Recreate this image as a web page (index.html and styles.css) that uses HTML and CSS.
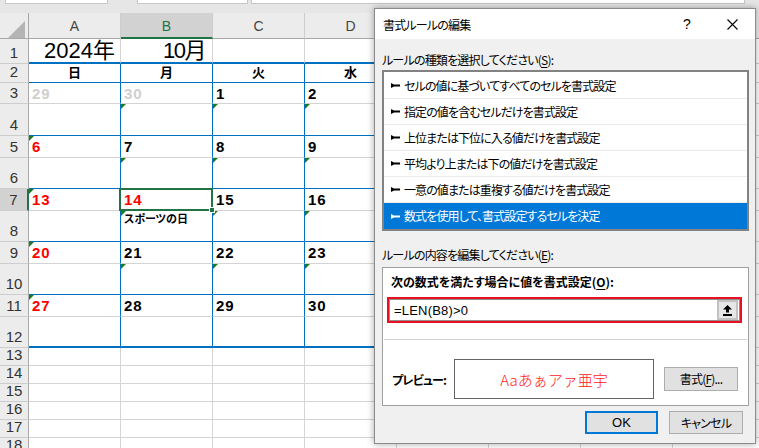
FILE: index.html
```html
<!DOCTYPE html>
<html lang="ja">
<head>
<meta charset="utf-8">
<title>書式ルールの編集</title>
<link rel="stylesheet" href="styles.css">
</head>
<body>
<div class="topbar">
  <div class="box b1"></div><div class="box b2"></div><div class="box b3"></div>
</div>
<div class="sheet">
  <div class="row hdr">
    <div class="corner"><span class="ctri"></span></div>
    <div class="c ch">A</div><div class="c ch sel">B</div><div class="c ch">C</div><div class="c ch">D</div><div class="c ch"></div><div class="c ch"></div><div class="c ch"></div><div class="c ch"></div>
  </div>
  <div class="row h25 bb2">
    <div class="rh">1</div>
    <div class="c big">2024年</div><div class="c big mon">10月</div><div class="c"></div><div class="c"></div><div class="c"></div><div class="c"></div><div class="c"></div><div class="c"></div>
  </div>
  <div class="row h19 cal bb">
    <div class="rh">2</div>
    <div class="c wd">日</div><div class="c wd">月</div><div class="c wd">火</div><div class="c wd">水</div><div class="c"></div><div class="c"></div><div class="c"></div><div class="c"></div>
  </div>
  <div class="row h21 cal">
    <div class="rh">3</div>
    <div class="c d gray">29</div><div class="c d gray">30</div><div class="c d">1</div><div class="c d">2</div><div class="c"></div><div class="c"></div><div class="c"></div><div class="c"></div>
  </div>
  <div class="row h32 cal bb">
    <div class="rh">4</div>
    <div class="c"></div><div class="c t"></div><div class="c t"></div><div class="c t"></div><div class="c t"></div><div class="c t"></div><div class="c t"></div><div class="c"></div>
  </div>
  <div class="row h22 cal">
    <div class="rh">5</div>
    <div class="c d red t">6</div><div class="c d">7</div><div class="c d">8</div><div class="c d">9</div><div class="c"></div><div class="c"></div><div class="c"></div><div class="c"></div>
  </div>
  <div class="row h31 cal bb">
    <div class="rh">6</div>
    <div class="c"></div><div class="c t"></div><div class="c t"></div><div class="c t"></div><div class="c t"></div><div class="c t"></div><div class="c t"></div><div class="c"></div>
  </div>
  <div class="row h22 cal">
    <div class="rh sel">7</div>
    <div class="c d red t">13</div><div class="c d red selc">14<span class="fh"></span></div><div class="c d">15</div><div class="c d">16</div><div class="c"></div><div class="c"></div><div class="c"></div><div class="c"></div>
  </div>
  <div class="row h31 cal bb">
    <div class="rh">8</div>
    <div class="c"></div><div class="c t note">スポーツの日</div><div class="c t"></div><div class="c t"></div><div class="c t"></div><div class="c t"></div><div class="c t"></div><div class="c"></div>
  </div>
  <div class="row h22 cal">
    <div class="rh">9</div>
    <div class="c d red t">20</div><div class="c d">21</div><div class="c d">22</div><div class="c d">23</div><div class="c"></div><div class="c"></div><div class="c"></div><div class="c"></div>
  </div>
  <div class="row h31 cal bb">
    <div class="rh">10</div>
    <div class="c"></div><div class="c t"></div><div class="c t"></div><div class="c t"></div><div class="c t"></div><div class="c t"></div><div class="c t"></div><div class="c"></div>
  </div>
  <div class="row h22 cal">
    <div class="rh">11</div>
    <div class="c d red t">27</div><div class="c d">28</div><div class="c d">29</div><div class="c d">30</div><div class="c"></div><div class="c"></div><div class="c"></div><div class="c"></div>
  </div>
  <div class="row h31 cal bb2">
    <div class="rh">12</div>
    <div class="c"></div><div class="c"></div><div class="c"></div><div class="c"></div><div class="c"></div><div class="c"></div><div class="c"></div><div class="c"></div>
  </div>
  <div class="row h18"><div class="rh">13</div><div class="c"></div><div class="c"></div><div class="c"></div><div class="c"></div><div class="c"></div><div class="c"></div><div class="c"></div><div class="c"></div></div>
  <div class="row h18"><div class="rh">14</div><div class="c"></div><div class="c"></div><div class="c"></div><div class="c"></div><div class="c"></div><div class="c"></div><div class="c"></div><div class="c"></div></div>
  <div class="row h18"><div class="rh">15</div><div class="c"></div><div class="c"></div><div class="c"></div><div class="c"></div><div class="c"></div><div class="c"></div><div class="c"></div><div class="c"></div></div>
  <div class="row h18"><div class="rh">16</div><div class="c"></div><div class="c"></div><div class="c"></div><div class="c"></div><div class="c"></div><div class="c"></div><div class="c"></div><div class="c"></div></div>
  <div class="row h18"><div class="rh">17</div><div class="c"></div><div class="c"></div><div class="c"></div><div class="c"></div><div class="c"></div><div class="c"></div><div class="c"></div><div class="c"></div></div>
  <div class="row h18"><div class="rh">18</div><div class="c"></div><div class="c"></div><div class="c"></div><div class="c"></div><div class="c"></div><div class="c"></div><div class="c"></div><div class="c"></div></div>
</div>

<div class="dlg">
  <div class="tbar">
    <span class="ttl">書式ルールの編集</span>
    <span class="q">?</span>
    <svg class="x" width="11" height="11" viewBox="0 0 11 11"><path d="M0.5 0.5 L10.5 10.5 M10.5 0.5 L0.5 10.5" stroke="#000" stroke-width="1.1" fill="none"/></svg>
  </div>
  <div class="dbody">
    <div class="lbl">ルールの種類を選択してください(<u>S</u>):</div>
    <div class="list">
      <div class="item"><svg class="arr" width="9" height="5" viewBox="0 0 9 5"><path d="M0 0 L3 1.5 L9 1.5 L9 3.5 L3 3.5 L0 5 Z"/></svg>セルの値に基づいてすべてのセルを書式設定</div>
      <div class="item"><svg class="arr" width="9" height="5" viewBox="0 0 9 5"><path d="M0 0 L3 1.5 L9 1.5 L9 3.5 L3 3.5 L0 5 Z"/></svg>指定の値を含むセルだけを書式設定</div>
      <div class="item"><svg class="arr" width="9" height="5" viewBox="0 0 9 5"><path d="M0 0 L3 1.5 L9 1.5 L9 3.5 L3 3.5 L0 5 Z"/></svg>上位または下位に入る値だけを書式設定</div>
      <div class="item"><svg class="arr" width="9" height="5" viewBox="0 0 9 5"><path d="M0 0 L3 1.5 L9 1.5 L9 3.5 L3 3.5 L0 5 Z"/></svg>平均より上または下の値だけを書式設定</div>
      <div class="item"><svg class="arr" width="9" height="5" viewBox="0 0 9 5"><path d="M0 0 L3 1.5 L9 1.5 L9 3.5 L3 3.5 L0 5 Z"/></svg>一意の値または重複する値だけを書式設定</div>
      <div class="item on"><svg class="arr" width="9" height="5" viewBox="0 0 9 5"><path d="M0 0 L3 1.5 L9 1.5 L9 3.5 L3 3.5 L0 5 Z"/></svg>数式を使用して、書式設定するセルを決定</div>
    </div>
    <div class="lbl lbl2">ルールの内容を編集してください(<u>E</u>):</div>
    <div class="group">
      <div class="glbl">次の数式を満たす場合に値を書式設定(<u>O</u>):</div>
      <div class="fbox">
        <div class="finput">
          <span class="ftext">=LEN(B8)&gt;0</span>
          <span class="refbtn"><svg width="9" height="11" viewBox="0 0 9 11"><path d="M4.5 0 L9 4.5 L6 4.5 L6 7.5 L3 7.5 L3 4.5 L0 4.5 Z"/><rect x="0" y="9" width="9" height="2"/></svg></span>
        </div>
      </div>
      <div class="gsep"></div>
      <div class="prow">
        <span class="plbl">プレビュー:</span>
        <div class="pbox">Aaあぁアァ亜宇</div>
        <div class="btn fmt">書式(<u>F</u>)...</div>
      </div>
    </div>
    <div class="brow">
      <div class="btn ok">OK</div>
      <div class="btn cancel">キャンセル</div>
    </div>
  </div>
</div>
</body>
</html>
```
FILE: styles.css
```css
* { box-sizing: border-box; margin: 0; padding: 0; }
html, body { width: 759px; height: 448px; overflow: hidden; background: #fff; }
body { position: relative; font-family: "Liberation Sans", "Noto Sans CJK JP", sans-serif; color: #000; }

.topbar { height: 13px; background: #e6e6e6; display: flex; align-items: flex-start; }
.box { height: 4px; background: #fff; border: 1px solid #c6c6c6; border-top: none; }
.b1 { margin-left: 5px; width: 103px; }
.b2 { margin-left: 29px; width: 111px; }
.b3 { margin-left: 3px; width: 494px; }

.sheet { display: flex; flex-direction: column; }
.row { display: flex; flex: none; }
.hdr { height: 26px; }
.h25 { height: 25px; }
.h19 { height: 19px; }
.h21 { height: 21px; }
.h22 { height: 22px; }
.h31 { height: 31px; }
.h32 { height: 32px; }
.h18 { height: 18px; }

.c {
  flex: none; width: 92px; position: relative;
  border-right: 1px solid #d4d4d4; border-bottom: 1px solid #d4d4d4;
  display: flex; align-items: center;
}
.corner, .rh {
  flex: none; width: 29px; background: #ececec;
  border-right: 1px solid #a8a8a8; border-bottom: 1px solid #cdcdcd;
  display: flex; justify-content: center; align-items: flex-end;
  padding-bottom: 3px; font-size: 15px; line-height: 15px; color: #333;
  position: relative;
}
.rh.sel { background: #d2d2d2; border-right: 2px solid #217346; }
.corner { border-bottom-color: #a8a8a8; }
.ctri {
  position: absolute; left: 8px; top: 8px; width: 0; height: 0;
  border-left: 17px solid transparent; border-bottom: 17px solid #b4b4b4;
}
.ch {
  background: #ececec; border-right-color: #cdcdcd; border-bottom-color: #a8a8a8;
  justify-content: center; font-size: 14px; color: #444; padding-top: 1px;
}
.ch.sel { background: #d2d2d2; color: #217346; border-bottom: 2px solid #217346; }

.cal > .c { border-right-color: #0070c0; }
.cal > .c:last-child { border-right-color: #d4d4d4; }
.bb > .c { border-bottom-color: #0070c0; }
.bb2 > .c { border-bottom: 2px solid #0070c0; }
.bb > .c:last-child { border-bottom-color: #d4d4d4; }
.bb2 > .c:last-child { border-bottom: 1px solid #d4d4d4; }

.big {
  justify-content: flex-end; padding-right: 5px;
  font-family: "Liberation Sans", "Noto Sans CJK JP", sans-serif; font-weight: normal;
  font-size: 22px; line-height: 22px; color: #000;
}
.big.mon { padding-right: 7px; letter-spacing: -1.5px; }
.wd {
  justify-content: center; font-family: "Liberation Sans", "Noto Sans CJK JP", sans-serif;
  font-weight: bold; font-size: 13px; line-height: 14px;
}
.d {
  padding-left: 3px; font-weight: bold; font-size: 15px; letter-spacing: 1px;
  font-family: "Liberation Sans", sans-serif; color: #000;
}
.d.red { color: #ff0000; }
.d.gray { color: #cfcfcf; }
.t::before {
  content: ""; position: absolute; left: 0; top: 0; width: 0; height: 0;
  border-top: 5px solid #1b7d1b; border-right: 5px solid transparent;
}
.note {
  align-items: flex-start; padding: 1px 0 0 3px;
  font-family: "Noto Sans CJK JP", sans-serif; font-weight: bold;
  font-size: 11px; line-height: 12px; font-feature-settings: "palt";
}
.selc { z-index: 2; }
.selc::after {
  content: ""; position: absolute; left: -2px; top: -1px; right: -1px; bottom: -1px;
  border: 2px solid #217346;
}
.fh {
  position: absolute; right: -3px; bottom: -3px; width: 6px; height: 6px;
  background: #217346; border: 1px solid #fff; z-index: 3;
}

/* dialog */
.dlg {
  position: absolute; left: 374px; top: 8px; width: 382px; height: 436px;
  background: #f0f0f0; border: 1px solid #8c8c8c;
  box-shadow: 0 0 7px rgba(0, 0, 0, 0.35);
  font-family: "Noto Sans CJK JP", sans-serif; font-size: 12px; color: #000;
  font-feature-settings: "palt"; letter-spacing: -0.8px;
  display: flex; flex-direction: column; z-index: 10;
}
.tbar {
  height: 30px; flex: none; background: #fff; display: flex; align-items: center;
  padding-left: 8px; font-size: 12px;
}
.q { margin-left: auto; width: 8px; text-align: center; font-family: "Liberation Sans", sans-serif; font-size: 14px; letter-spacing: 0; }
.x { margin-left: 36px; margin-right: 17px; }

.dbody { padding: 12px 6px 0 7px; display: flex; flex-direction: column; }
.lbl { line-height: 18px; height: 18px; }
.lbl u, .glbl u, .btn u { text-decoration-thickness: 1px; text-underline-offset: 2px; }
.list {
  margin-top: 1px; height: 161px; background: #fff;
  border: 2px solid #828282; padding-top: 1px;
}
.item {
  height: 26px; border-bottom: 1px solid #ebebeb; display: flex; align-items: center;
  padding-left: 7px; line-height: 16px; letter-spacing: -0.9px;
}
.item .arr { margin-right: 4px; fill: #000; flex: none; }
.item.on { background: #0078d7; color: #fff; border-bottom: none; }
.item.on .arr { fill: #fff; }
.lbl2 { margin-top: 15px; }

.group {
  margin-top: 3px; height: 139px; background: #fff; border: 1px solid #a0a0a0;
  display: flex; flex-direction: column;
}
.glbl { margin: 5px 0 0 8px; line-height: 18px; font-weight: bold; letter-spacing: 0; }
.fbox {
  margin: 6px 0 0 4px; width: 355px; height: 26px; border: 2px solid #e81123;
}
.finput {
  height: 100%; background: #fff; border: 1px solid #8f8f8f;
  display: flex; align-items: center; padding-left: 4px;
}
.ftext { font-family: "Liberation Sans", sans-serif; font-size: 13px; flex: 1; letter-spacing: 0.2px; }
.refbtn {
  width: 21px; height: 20px; margin-right: 1px; background: #e6e6e6;
  border: 2px solid #c2c2c2; display: flex; align-items: center; justify-content: center;
}
.refbtn svg { fill: #000; }
.gsep { margin: 16px 1px 0 1px; height: 1px; background: #d0d0d0; }
.prow { margin-top: 19px; height: 40px; display: flex; align-items: center; }
.plbl { margin-left: 9px; width: 62px; font-weight: bold; }
.pbox {
  width: 200px; height: 40px; border: 1px solid #646464; background: #fff;
  display: flex; align-items: center; justify-content: center;
  color: #ff1a1a; font-size: 15px; font-feature-settings: normal; letter-spacing: 0;
  font-weight: 300;
}
.btn {
  background: #e1e1e1; border: 1px solid #adadad; display: flex;
  align-items: center; justify-content: center; line-height: 16px;
}
.fmt { margin-left: 10px; width: 74px; height: 24px; }
.brow { margin-top: 5px; display: flex; justify-content: flex-end; padding-right: 6px; }
.ok { width: 73px; height: 23px; border: 2px solid #0078d7; font-family: "Liberation Sans", sans-serif; font-size: 13px; letter-spacing: 0; }
.cancel { margin-left: 11px; width: 74px; height: 23px; }
```
